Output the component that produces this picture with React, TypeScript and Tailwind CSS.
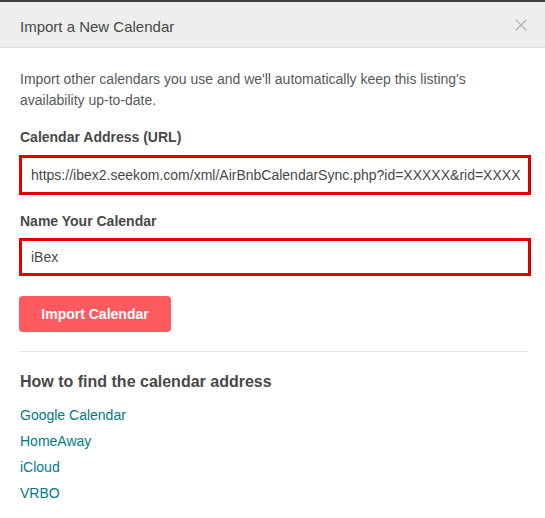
import { X } from 'lucide-react'

const links = ['Google Calendar', 'HomeAway', 'iCloud', 'VRBO']

export default function App() {
  return (
    <div
      className="w-[545px] h-[518px] bg-white text-[#484848] border-t-2 border-[#3c3f3c]"
      style={{ fontFamily: '"Liberation Sans", Arial, sans-serif' }}
    >
      {/* Header */}
      <div className="h-[46px] bg-[#edefed] border-b border-[#dce0dc] flex items-center justify-between pl-5 pr-[14px]">
        <h1 className="pt-[5px] text-[15px] text-[#484848]">Import a New Calendar</h1>
        <X className="w-5 h-5 text-[#b5b7b5]" strokeWidth={1.6} />
      </div>

      <div className="px-5 pt-[21px]">
        <p className="text-[14px] leading-[21px] text-[#565a5c]">
          Import other calendars you use and we'll automatically keep this listing's
          <br />
          availability up-to-date.
        </p>

        <label className="block mt-[16px] text-[14px] font-bold text-[#484848] leading-[20px]">
          Calendar Address (URL)
        </label>
        <div className="mt-[8px] ml-[-1px] mr-[-6px] h-[40px] border-[3px] border-[#e00000] flex items-center pl-[9px] pr-[8px]">
          <span className="block flex-1 min-w-0 overflow-hidden text-[14px] text-[#484848] whitespace-nowrap">
            https://ibex2.seekom.com/xml/AirBnbCalendarSync.php?id=XXXXX&amp;rid=XXXXX
          </span>
        </div>

        <label className="block mt-[16px] text-[14px] font-bold text-[#484848] leading-[20px]">
          Name Your Calendar
        </label>
        <div className="mt-[7px] ml-[-1px] mr-[-6px] h-[38px] border-[3px] border-[#e00000] flex items-center pl-[9px]">
          <span className="text-[14px] text-[#484848]">iBex</span>
        </div>

        <button className="mt-[20px] ml-[-1px] w-[152px] h-[36px] rounded-[4px] bg-[#ff5a5f] text-white text-[14px] font-bold">
          Import Calendar
        </button>

        <div className="mt-[19px] mr-[-3px] border-t border-[#e4e4e4]" />

        <h2 className="mt-[19px] text-[16px] font-bold text-[#484848] leading-[22px]">
          How to find the calendar address
        </h2>

        <ul className="mt-[12px] flex flex-col gap-[6px]">
          {links.map((l) => (
            <li key={l} className="text-[14px] leading-[20px] text-[#007a87]">
              {l}
            </li>
          ))}
        </ul>
      </div>
    </div>
  )
}
